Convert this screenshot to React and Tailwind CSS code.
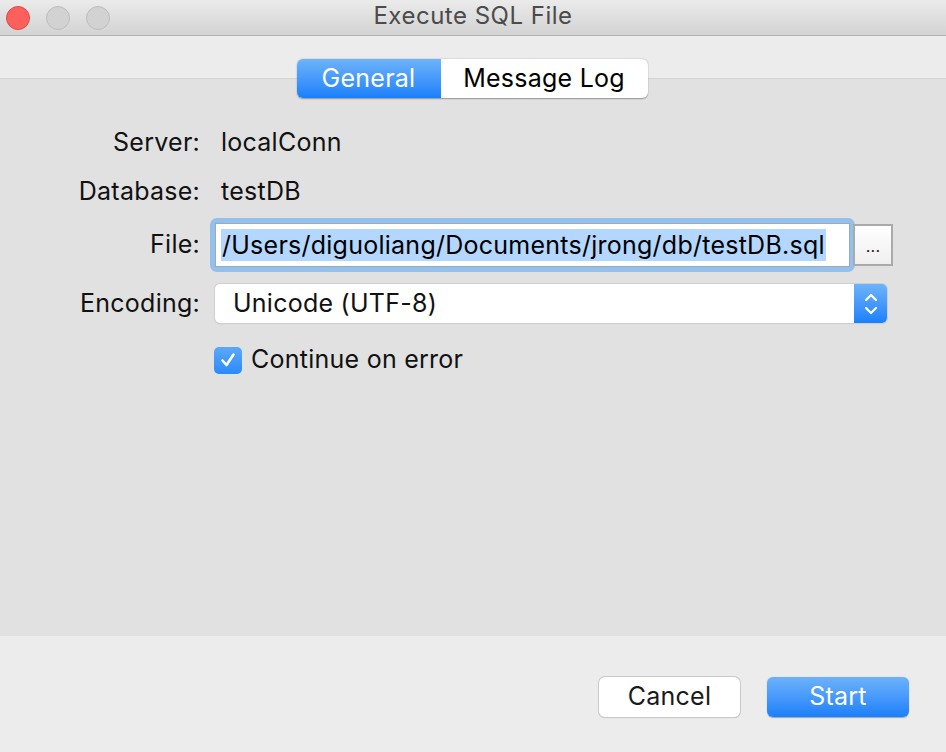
import React from 'react';

const font = { fontFamily: 'Inter, "Liberation Sans", Arial, sans-serif' };

function TrafficLights() {
  return (
    <div className="flex items-center gap-[16px] pl-[6px]">
      <span className="w-[24px] h-[24px] rounded-full bg-[#fc605c] border border-[#de4b46]" />
      <span className="w-[24px] h-[24px] rounded-full bg-[#d2d2d2] border border-[#bdbdbd]" />
      <span className="w-[24px] h-[24px] rounded-full bg-[#d2d2d2] border border-[#bdbdbd]" />
    </div>
  );
}

function Row({ label, children, className }) {
  return (
    <div className={`flex items-center ${className}`}>
      <div className="w-[200px] text-right text-[25px] text-[#111] shrink-0">{label}</div>
      <div className="flex-1 flex items-center">{children}</div>
    </div>
  );
}

export default function App() {
  return (
    <div className="w-[946px] h-[752px] flex flex-col bg-[#e1e1e1] overflow-hidden tracking-[0.25px]" style={font}>
      {/* title bar */}
      <div className="relative h-[36px] shrink-0 flex items-center bg-gradient-to-b from-[#ebebeb] to-[#d3d3d3] border-b border-[#b2b2b2]">
        <TrafficLights />
        <div className="absolute inset-x-0 top-0 h-[31px] flex items-center justify-center text-[24px] tracking-[0.5px] text-[#4b4b4b] pointer-events-none">
          Execute SQL File
        </div>
      </div>

      {/* toolbar with tabs */}
      <div className="h-[43px] shrink-0 bg-[#ececec] border-b border-[#d4d4d4] flex justify-center pt-[23px]">
        <div className="relative z-10 flex h-[39px] rounded-[6px] shadow-[0_0.5px_1.5px_rgba(0,0,0,0.35)] bg-white ml-[-2px]">
          <div className="w-[144px] rounded-l-[6px] bg-gradient-to-b from-[#6cb3fa] to-[#197ffb] text-white text-[25px] flex items-center justify-center">
            General
          </div>
          <div className="w-[207px] rounded-r-[6px] text-black text-[25px] flex items-center justify-center">
            Message Log
          </div>
        </div>
      </div>

      {/* form */}
      <div className="flex-1 flex flex-col pt-[49px]">
        <Row label="Server:" className="h-[30px]">
          <span className="pl-[21px] text-[25px] text-[#111]">localConn</span>
        </Row>
        <Row label="Database:" className="h-[30px] mt-[19px]">
          <span className="pl-[21px] text-[25px] text-[#111]">testDB</span>
        </Row>
        <Row label="File:" className="h-[54px] mt-[11px]">
          <div className="ml-[10px] w-[645px] h-[54px] rounded-[7px] bg-[#94c0ee] p-[5px] shrink-0">
            <div className="h-full bg-white border border-[#9ab] flex items-center pl-[5px] overflow-hidden">
              <span className="bg-[#b3d7ff] text-[25px] text-black leading-[32px] px-[1px] whitespace-nowrap">
                /Users/diguoliang/Documents/jrong/db/testDB.sql
              </span>
            </div>
          </div>
          <div className="ml-[-2px] w-[40px] h-[42px] border-2 border-[#aaaaaa] bg-gradient-to-b from-white to-[#efefef] flex items-center justify-center text-[16px] text-[#222] leading-none pt-[2px]">
            ...
          </div>
        </Row>
        <Row label="Encoding:" className="h-[39px] mt-[12px]">
          <div className="ml-[15px] w-[672px] h-[39px] rounded-[5px] bg-white shadow-[0_0_0_1px_#cfcfcf,0_1px_1px_rgba(0,0,0,0.2)] flex items-center">
            <span className="flex-1 pl-[18px] text-[25px] text-[#111]">Unicode (UTF-8)</span>
            <div className="w-[33px] h-full rounded-r-[5px] bg-gradient-to-b from-[#6cb3fa] to-[#197ffb] flex items-center justify-center">
              <svg width="16" height="26" viewBox="0 0 16 26" fill="none" stroke="white" strokeWidth="2.2" strokeLinecap="round" strokeLinejoin="round">
                <path d="M3 9 L8 4 L13 9" />
                <path d="M3 17 L8 22 L13 17" />
              </svg>
            </div>
          </div>
        </Row>
        <div className="flex items-center h-[26px] mt-[24px] pl-[214px]">
          <div className="w-[28px] h-[27px] rounded-[5px] bg-gradient-to-b from-[#5aa8f9] to-[#2b8afa] flex items-center justify-center">
            <svg width="18" height="18" viewBox="0 0 18 18" fill="none" stroke="white" strokeWidth="2.6" strokeLinecap="round" strokeLinejoin="round">
              <path d="M3.5 9.5 L7.5 14 L14.5 3.5" />
            </svg>
          </div>
          <span className="ml-[9px] text-[25px] text-[#111]">Continue on error</span>
        </div>
      </div>

      {/* footer */}
      <div className="h-[116px] shrink-0 bg-[#ececec] flex items-start justify-end pt-[41px] pr-[37px] gap-[27px]">
        <button className="w-[141px] h-[40px] rounded-[6px] bg-white shadow-[0_0_0_1px_#c9c9c9,0_1px_1px_rgba(0,0,0,0.25)] text-[25px] text-[#1a1a1a]">
          Cancel
        </button>
        <button className="w-[142px] h-[40px] rounded-[6px] bg-gradient-to-b from-[#6cb2fa] to-[#197ffb] shadow-[0_0.5px_1px_rgba(0,0,0,0.3)] text-[25px] text-white">
          Start
        </button>
      </div>
    </div>
  );
}
